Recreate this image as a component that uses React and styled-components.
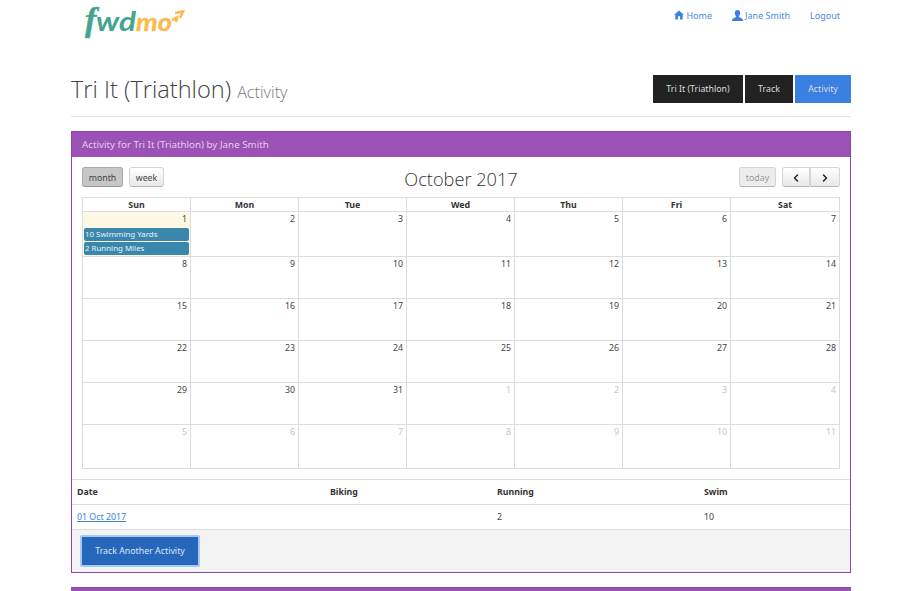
import React from 'react'
import styled, { createGlobalStyle } from 'styled-components'
import { ChevronLeft, ChevronRight } from 'lucide-react'

const Global = createGlobalStyle`
  html, body { margin: 0; padding: 0; background: #fff; }
  body {
    font-family: "Noto Sans", "Open Sans", sans-serif;
    color: #333;
    height: 591px;
    overflow: hidden;
  }
  * { box-sizing: border-box; }
`

const Page = styled.div`
  width: 780px;
  margin-left: 71px;
`

const TopBar = styled.div`
  height: 75px;
  display: flex;
  justify-content: space-between;
  align-items: flex-start;
`

const LogoWrap = styled.a`
  display: block;
  margin-left: 12px;
  width: 116px;
  height: 45px;
`

const TopNav = styled.nav`
  display: flex;
  gap: 20px;
  padding: 8px 11px 0 0;
`

const NavLink = styled.a`
  display: flex;
  align-items: center;
  gap: 2px;
  height: 14px;
  font-size: 9px;
  color: #4a88e0;
`

const TitleRow = styled.div`
  height: 42px;
  display: flex;
  justify-content: space-between;
  align-items: flex-start;
  border-bottom: 1px solid #e4e4e4;
`

const Title = styled.h1`
  margin: 0;
  font-family: "Open Sans", sans-serif;
  font-size: 23.6px;
  line-height: 28px;
  font-weight: 300;
  color: #444;
  small {
    font-size: 16.2px;
    font-weight: 300;
    color: #777;
    margin-left: 6px;
  }
`

const Tabs = styled.div`
  display: flex;
  gap: 2px;
`

const Tab = styled.a`
  width: ${p => p.$width}px;
  height: 28px;
  padding-bottom: 1px;
  display: flex;
  align-items: center;
  justify-content: center;
  font-size: 8.8px;
  color: #ddd;
  background: ${p => (p.$active ? '#3a80e2' : '#222')};
`

const Panel = styled.section`
  margin-top: 14px;
  border: 1px solid #8a47b2;
`

const PanelHeading = styled.div`
  height: 25px;
  padding-left: 10px;
  display: flex;
  align-items: center;
  background: #9b51b6;
  color: #e3cfea;
  font-size: 9.8px;
`

const PanelBody = styled.div`
  padding: 10px;
`

const CalToolbar = styled.div`
  height: 30px;
  display: flex;
  justify-content: space-between;
  align-items: flex-start;
`

const CalTitle = styled.h2`
  margin: 0;
  font-family: "Open Sans", sans-serif;
  font-weight: 300;
  font-size: 18.2px;
  line-height: 24px;
  color: #333;
`

const ButtonGroup = styled.div`
  display: flex;
  justify-content: ${p => p.$justify || 'flex-start'};
  gap: ${p => p.$gap || 0}px;
  width: 200px;
`

const Joined = styled.div`
  display: flex;
`

const CalButton = styled.button`
  width: ${p => p.$width}px;
  height: 20px;
  padding: 1px 0 0;
  font: 8.8px "Noto Sans", sans-serif;
  color: ${p => (p.$disabled ? '#999' : '#444')};
  border: 1px solid ${p => (p.$active ? '#aaa' : '#d4d4d4')};
  border-bottom-color: ${p => (p.$active ? '#999' : '#b5b5b5')};
  border-radius: ${p => p.$radius || '3px'};
  background: ${p => (p.$active ? '#c6c6c6' : p.$disabled ? '#ececec' : 'linear-gradient(#fff, #e8e8e8)')};
  display: flex;
  align-items: center;
  justify-content: center;
`

const Grid = styled.div`
  display: grid;
  grid-template-columns: repeat(6, 108px) 109px;
  grid-template-rows: 14px 45px repeat(4, 42px) 44px;
  width: 758px;
  border-top: 1px solid #ddd;
  border-left: 1px solid #ddd;
`

const HeadCell = styled.div`
  border-right: 1px solid #ddd;
  border-bottom: 1px solid #ddd;
  padding-top: 1px;
  font-size: 8.8px;
  font-weight: 700;
  text-align: center;
  line-height: 12px;
  color: #333;
`

const DayCell = styled.div`
  border-right: 1px solid #ddd;
  border-bottom: 1px solid #ddd;
  background: ${p => (p.$today ? '#fcf8e3' : '#fff')};
  padding: 0 1px;
  min-width: 0;
`

const DayNum = styled.div`
  font-size: 8.8px;
  line-height: 14px;
  padding-right: 2px;
  margin-bottom: 2px;
  text-align: right;
  color: ${p => (p.$muted ? '#c4c4c4' : '#444')};
`

const CalEvent = styled.div`
  height: 13px;
  margin-top: 1px;
  border-radius: 2px;
  background: #3a87ad;
  color: #eaf2f6;
  font-size: 7.9px;
  line-height: 13px;
  padding-left: 1px;
  white-space: nowrap;
`

const DataTable = styled.div`
  display: grid;
  grid-template-columns: 253px 167px 207px 1fr;
  border-top: 1px solid #ddd;
  font-size: 8.8px;
`

const TableHead = styled.div`
  height: 25px;
  padding-left: 5px;
  line-height: 24px;
  border-bottom: 1px solid #ddd;
  font-weight: 700;
  color: #333;
`

const TableCell = styled(TableHead)`
  font-weight: 400;
  color: #444;
  a { color: #3b80e0; text-decoration: underline; }
`

const PanelFooter = styled.div`
  height: 42px;
  background: #f3f3f3;
  padding: 5px 0 0 8px;
`

const TrackButton = styled.button`
  width: 120px;
  height: 32px;
  padding: 0 0 1px;
  border: 2px solid #a6c9f5;
  border-radius: 2px;
  background: #2767bb;
  color: #dbe6f5;
  font: 8.8px "Noto Sans", sans-serif;
`

const NextPanel = styled.div`
  margin-top: 14px;
  height: 10px;
  background: #9b51b6;
  border-top: 1px solid #8a47b2;
`

const HomeIcon = () => (
  <svg width="10" height="10" viewBox="0 0 12 11" fill="#3b80e0">
    <path d="M6 0 L12 5.6 H10.4 V11 H7.3 V7 H4.7 V11 H1.6 V5.6 H0 Z" />
  </svg>
)

const UserIcon = () => (
  <svg width="11" height="11" viewBox="0 0 11 11" fill="#3b80e0">
    <path d="M5.5 0 C7.2 0 8.2 1.3 8.2 3 C8.2 4.4 7.5 5.6 6.8 6.2 C6.8 7 7.5 7.4 9 7.9 C10.3 8.4 11 9 11 11 H0 C0 9 .7 8.4 2 7.9 C3.5 7.4 4.2 7 4.2 6.2 C3.5 5.6 2.8 4.4 2.8 3 C2.8 1.3 3.8 0 5.5 0 Z" />
  </svg>
)

const Logo = () => (
  <svg width="116" height="45" viewBox="0 0 116 45">
    <text x="2" y="31" fontFamily="Liberation Serif, serif" fontStyle="italic" fontWeight="700" fontSize="34" fill="#43a58f" stroke="#43a58f" strokeWidth=".5">f</text>
    <text x="13" y="31" fontFamily="Lato, sans-serif" fontStyle="italic" fontWeight="700" fontSize="27" textLength="40" lengthAdjust="spacingAndGlyphs" fill="#43a58f">wd</text>
    <text x="53" y="31" fontFamily="Lato, sans-serif" fontStyle="italic" fontWeight="700" fontSize="25" textLength="36" lengthAdjust="spacingAndGlyphs" fill="#f9ba4e" stroke="#f9ba4e" strokeWidth=".4">mo</text>
    <path d="M89 20 L94 17.5 L93 22 M92 13 L100 11.5 L97 18" fill="none" stroke="#f9ba4e" strokeWidth="2.6" />
  </svg>
)

const WEEKDAYS = ['Sun', 'Mon', 'Tue', 'Wed', 'Thu', 'Fri', 'Sat']

// october 2017 starts on a sunday, the last two rows run into november
const DAYS = [
  ...Array.from({ length: 31 }, (_, i) => ({ n: i + 1 })),
  ...Array.from({ length: 11 }, (_, i) => ({ n: i + 1, muted: true })),
]

const EVENTS = { 1: ['10 Swimming Yards', '2 Running Miles'] }

function App() {
  return (
    <Page>
      <Global />
      <TopBar>
        <LogoWrap><Logo /></LogoWrap>
        <TopNav>
          <NavLink><HomeIcon />Home</NavLink>
          <NavLink><UserIcon />Jane Smith</NavLink>
          <NavLink>Logout</NavLink>
        </TopNav>
      </TopBar>
      <TitleRow>
        <Title>Tri It (Triathlon)<small>Activity</small></Title>
        <Tabs>
          <Tab $width={90}>Tri It (Triathlon)</Tab>
          <Tab $width={48}>Track</Tab>
          <Tab $width={56} $active>Activity</Tab>
        </Tabs>
      </TitleRow>
      <Panel>
        <PanelHeading>Activity for Tri It (Triathlon) by Jane Smith</PanelHeading>
        <PanelBody>
          <CalToolbar>
            <ButtonGroup $gap={6}>
              <CalButton $width={41} $active>month</CalButton>
              <CalButton $width={35}>week</CalButton>
            </ButtonGroup>
            <CalTitle>October 2017</CalTitle>
            <ButtonGroup $gap={6} $justify="flex-end">
              <CalButton $width={37} $disabled>today</CalButton>
              <Joined>
                <CalButton $width={28} $radius="3px 0 0 3px"><ChevronLeft size={12} strokeWidth={3} color="#222" /></CalButton>
                <CalButton $width={30} $radius="0 3px 3px 0"><ChevronRight size={12} strokeWidth={3} color="#222" /></CalButton>
              </Joined>
            </ButtonGroup>
          </CalToolbar>
          <Grid>
            {WEEKDAYS.map(d => <HeadCell key={d}>{d}</HeadCell>)}
            {DAYS.map((d, i) => (
              <DayCell key={i} $today={i === 0}>
                <DayNum $muted={d.muted}>{d.n}</DayNum>
                {!d.muted && EVENTS[d.n] && EVENTS[d.n].map(e => <CalEvent key={e}>{e}</CalEvent>)}
              </DayCell>
            ))}
          </Grid>
        </PanelBody>
        <DataTable>
          <TableHead>Date</TableHead>
          <TableHead>Biking</TableHead>
          <TableHead>Running</TableHead>
          <TableHead>Swim</TableHead>
          <TableCell><a>01 Oct 2017</a></TableCell>
          <TableCell />
          <TableCell>2</TableCell>
          <TableCell>10</TableCell>
        </DataTable>
        <PanelFooter>
          <TrackButton>Track Another Activity</TrackButton>
        </PanelFooter>
      </Panel>
      <NextPanel />
    </Page>
  )
}

export default App
